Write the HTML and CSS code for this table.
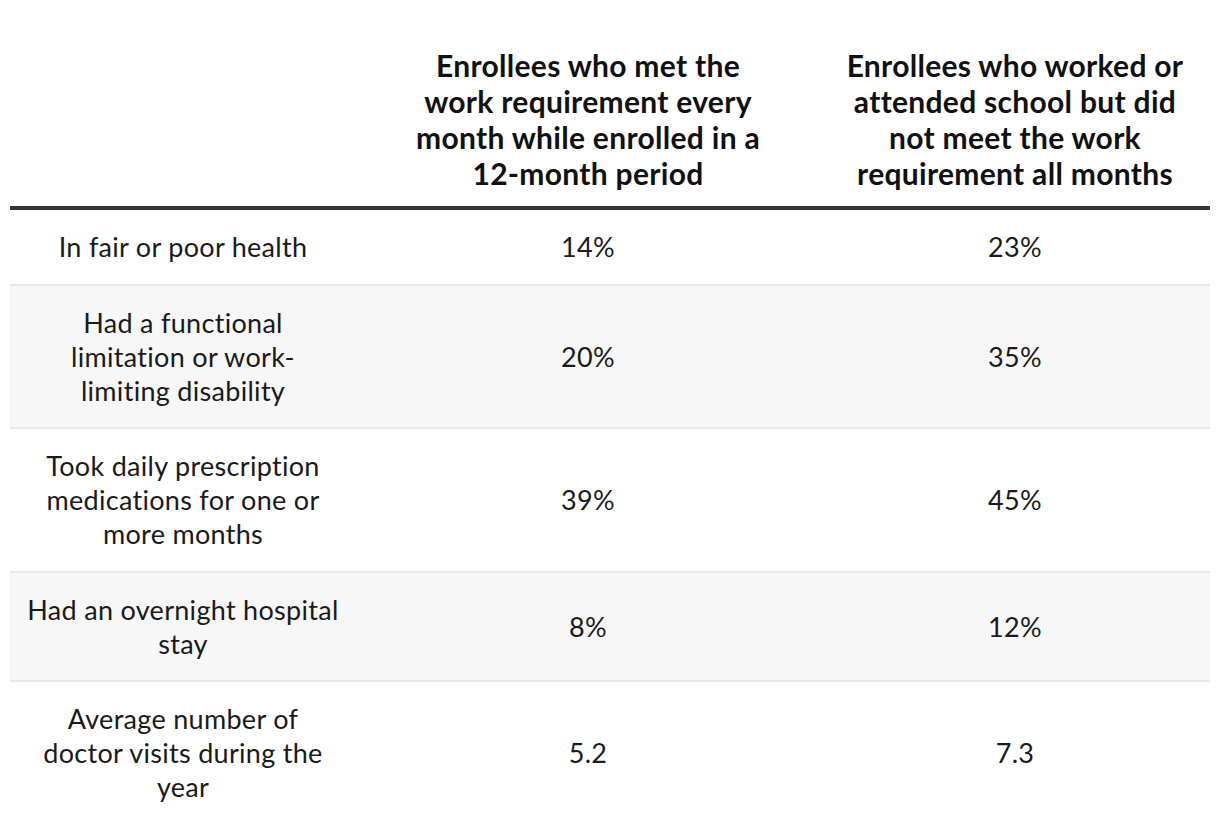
FILE: index.html
```html
<!DOCTYPE html>
<html lang="en">
<head>
<meta charset="utf-8">
<title>Enrollee health table</title>
<link rel="stylesheet" href="styles.css">
</head>
<body>
<div class="wrap">
  <table class="data">
    <colgroup>
      <col class="c-label">
      <col class="c-met">
      <col class="c-notmet">
    </colgroup>
    <thead>
      <tr>
        <th></th>
        <th>Enrollees who met the<br>work requirement every<br>month while enrolled in a<br>12-month period</th>
        <th>Enrollees who worked or<br>attended school but did<br>not meet the work<br>requirement all months</th>
      </tr>
    </thead>
    <tbody>
      <tr>
        <td>In fair or poor health</td>
        <td>14%</td>
        <td>23%</td>
      </tr>
      <tr class="alt">
        <td>Had a functional<br>limitation or work-<br>limiting disability</td>
        <td>20%</td>
        <td>35%</td>
      </tr>
      <tr>
        <td>Took daily prescription<br>medications for one or<br>more months</td>
        <td>39%</td>
        <td>45%</td>
      </tr>
      <tr class="alt">
        <td>Had an overnight hospital<br>stay</td>
        <td>8%</td>
        <td>12%</td>
      </tr>
      <tr>
        <td>Average number of<br>doctor visits during the<br>year</td>
        <td>5.2</td>
        <td>7.3</td>
      </tr>
    </tbody>
  </table>
</div>
</body>
</html>
```

FILE: styles.css
```css
html, body {
  margin: 0;
  padding: 0;
  background: #ffffff;
}

body {
  font-family: Lato, "Liberation Sans", sans-serif;
  color: #1a1a1a;
}

.wrap {
  padding: 32px 10px 0 10px;
}

.data {
  width: 1200px;
  border-collapse: collapse;
  table-layout: fixed;
}

.c-label { width: 346px; }
.c-met { width: 464px; }
.c-notmet { width: 390px; }

.data th {
  font-size: 30px;
  font-weight: 700;
  letter-spacing: 0.3px;
  line-height: 36px;
  color: #111111;
  text-align: center;
  vertical-align: bottom;
  padding: 15px 0;
  border-bottom: 4px solid #333333;
}

.data td {
  font-size: 27px;
  font-weight: 400;
  letter-spacing: 0.3px;
  line-height: 34px;
  text-align: center;
  vertical-align: middle;
  padding: 20px 0 19.5px;
  border-bottom: 2px solid #e8e8e8;
}

.data tbody tr.alt td {
  background: #f7f7f7;
}

.data tbody tr:last-child td {
  border-bottom: none;
}
```
